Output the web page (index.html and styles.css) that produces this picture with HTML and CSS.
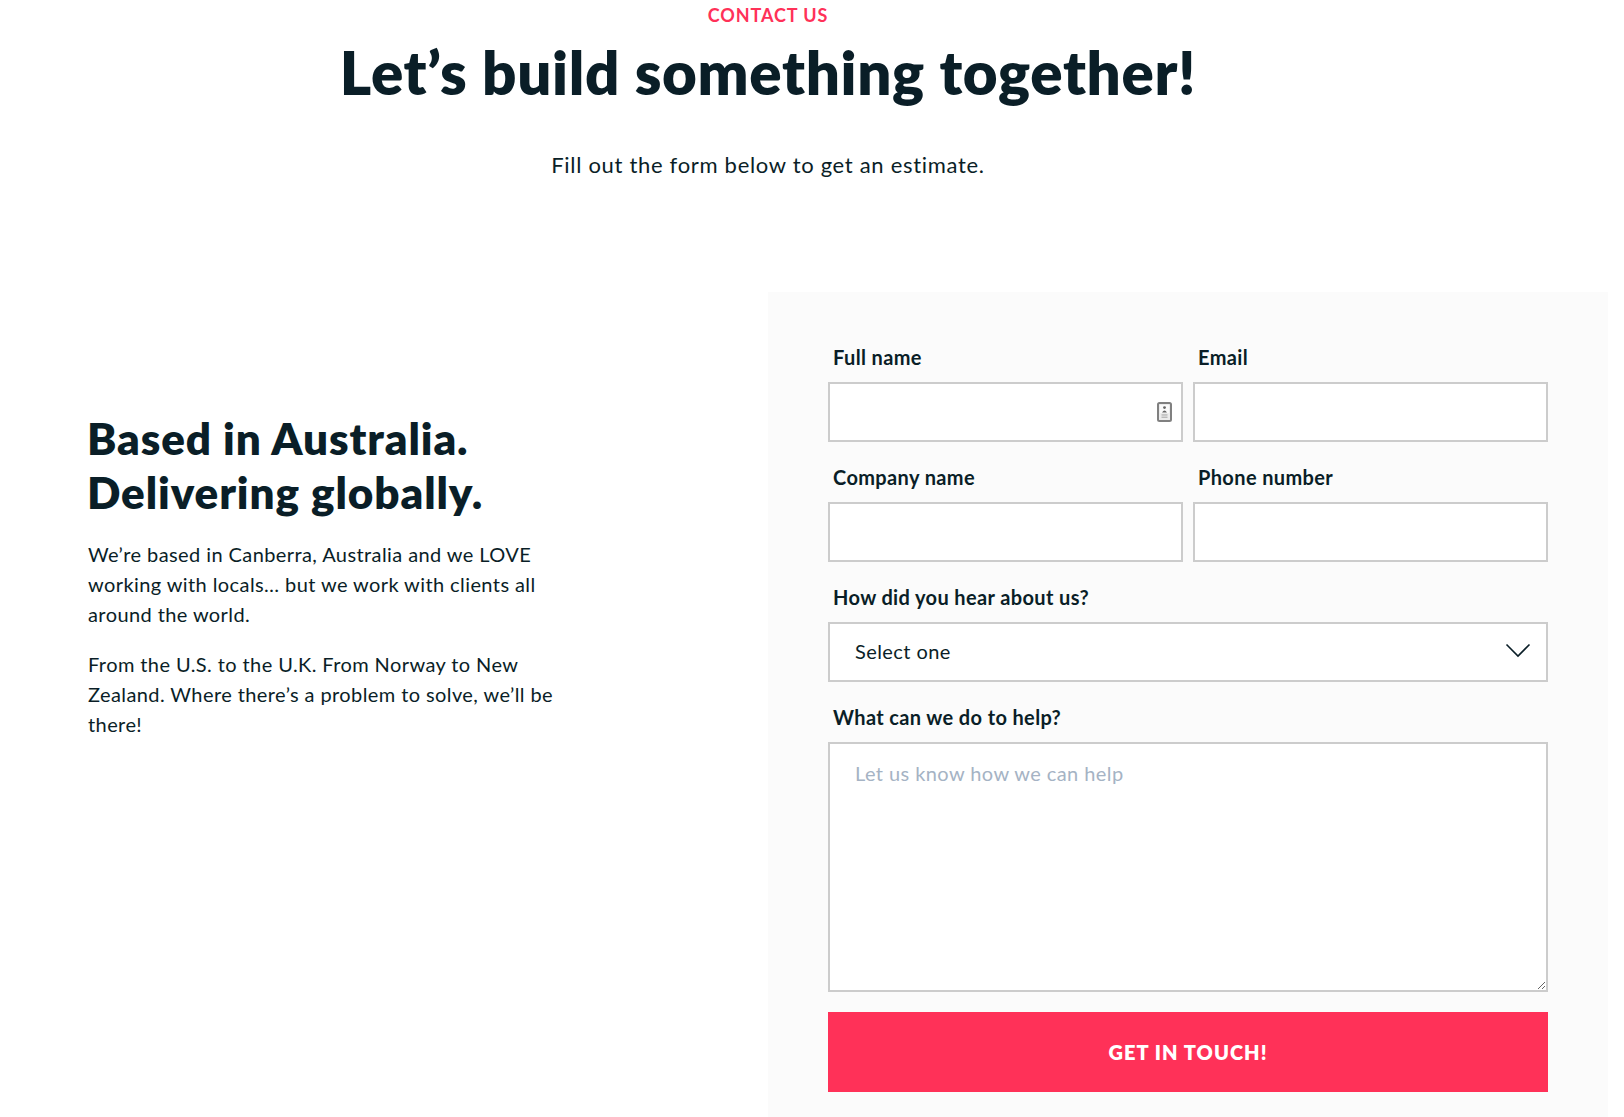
FILE: index.html
```html
<!DOCTYPE html>
<html lang="en">
<head>
<meta charset="utf-8">
<title>Contact us</title>
<link rel="stylesheet" href="styles.css">
</head>
<body>
<main class="page">
  <header class="hero">
    <p class="eyebrow">CONTACT US</p>
    <h1 class="title">Let’s build something together!</h1>
    <p class="lead">Fill out the form below to get an estimate.</p>
  </header>
  <section class="columns">
    <div class="intro">
      <h2 class="intro-title">Based in Australia.<br>Delivering globally.</h2>
      <p class="intro-text">We’re based in Canberra, Australia and we LOVE working with locals… but we work with clients all around the world.</p>
      <p class="intro-text">From the U.S. to the U.K. From Norway to New Zealand. Where there’s a problem to solve, we’ll be there!</p>
    </div>
    <form class="panel">
      <div class="field">
        <label class="label" for="fullname">Full name</label>
        <div class="control">
          <input class="input" id="fullname" type="text">
          <svg class="contact-icon" width="15" height="20" viewBox="0 0 15 20" aria-hidden="true">
            <rect x="1" y="1" width="13" height="18" rx="1.5" fill="#ececec" stroke="#808080" stroke-width="2"/>
            <rect x="3" y="3" width="9" height="8" fill="#fafafa"/>
            <circle cx="7.500" cy="5.600" r="1.400" fill="#666"/>
            <path d="M5 10.600 Q7.500 6.200 10 10.600Z" fill="#666"/>
            <rect x="4.500" y="12.300" width="6" height="1.300" fill="#b5b5b5"/>
            <rect x="4.500" y="14.600" width="6" height="1.300" fill="#b5b5b5"/>
          </svg>
        </div>
      </div>
      <div class="field">
        <label class="label" for="email">Email</label>
        <input class="input" id="email" type="email">
      </div>
      <div class="field">
        <label class="label" for="company">Company name</label>
        <input class="input" id="company" type="text">
      </div>
      <div class="field">
        <label class="label" for="phone">Phone number</label>
        <input class="input" id="phone" type="tel">
      </div>
      <div class="field wide">
        <label class="label" for="source">How did you hear about us?</label>
        <div class="control">
          <select class="input select" id="source"><option>Select one</option></select>
          <svg class="chevron" width="26" height="15" viewBox="0 0 26 15" aria-hidden="true">
            <path d="M1.500 1.500 L13 13 L24.500 1.500" fill="none" stroke="#0a1e27" stroke-width="1.600"/>
          </svg>
        </div>
      </div>
      <div class="field wide">
        <label class="label" for="help">What can we do to help?</label>
        <textarea class="input textarea" id="help" placeholder="Let us know how we can help"></textarea>
      </div>
      <button class="submit wide" type="button">GET IN TOUCH!</button>
    </form>
  </section>
</main>
</body>
</html>
```
FILE: styles.css
```css
* { box-sizing: border-box; }
html, body { margin: 0; padding: 0; background: #fff; }
body { font-family: Lato, "Noto Sans", sans-serif; color: #0a1e27; }
.page { width: 1608px; height: 1117px; overflow: hidden; }
.hero { width: 1536px; text-align: center; height: 292px; }
.eyebrow { margin: 0; font-size: 18px; line-height: 30px; font-weight: 700; color: #ff3158; letter-spacing: 0.9px; }
.title { margin: 6px 0 0; font-size: 60px; line-height: 72px; font-weight: 800; letter-spacing: 0.67px; }
.lead { margin: 42px 0 0; font-size: 22px; line-height: 30px; letter-spacing: 0.69px; }
.columns { display: grid; grid-template-columns: 768px 840px; height: 825px; }
.intro { padding: 119px 0 0 87px; }
.intro-title { margin: 0 0 20px; font-size: 44px; line-height: 54px; font-weight: 800; letter-spacing: 0.9px; }
.intro-text { margin: 0 0 20px; width: 480px; padding-left: 1px; font-size: 20px; line-height: 30px; letter-spacing: 0.41px; }
.panel { background: #fbfbfb; padding: 30px 60px 25px; display: grid; grid-template-columns: 355px 355px; column-gap: 10px; align-content: start; }
.wide { grid-column: 1 / -1; }
.field { display: flex; flex-direction: column; }
.label { height: 60px; padding: 23px 0 0 5px; font-size: 20px; line-height: 24px; font-weight: 700; letter-spacing: 0.37px; }
.control { position: relative; }
.input { display: block; width: 100%; height: 60px; margin: 0; padding: 0 25px; border: 2px solid #ccc; border-radius: 0; background: #fff; font: inherit; font-size: 20px; color: #0a1e27; letter-spacing: 0.42px; outline: none; }
.select { appearance: none; -webkit-appearance: none; padding-bottom: 2px; }
.textarea { height: 250px; padding: 14px 25px; line-height: 30px; resize: vertical; }
.textarea::placeholder { color: #a5b3c4; opacity: 1; }
.contact-icon { position: absolute; right: 11px; top: 20px; }
.chevron { position: absolute; right: 17px; top: 21px; pointer-events: none; }
.submit { height: 80px; margin-top: 20px; border: 0; background: #ff3158; color: #fff; font: inherit; font-size: 20px; font-weight: 800; letter-spacing: 1.05px; }
```
